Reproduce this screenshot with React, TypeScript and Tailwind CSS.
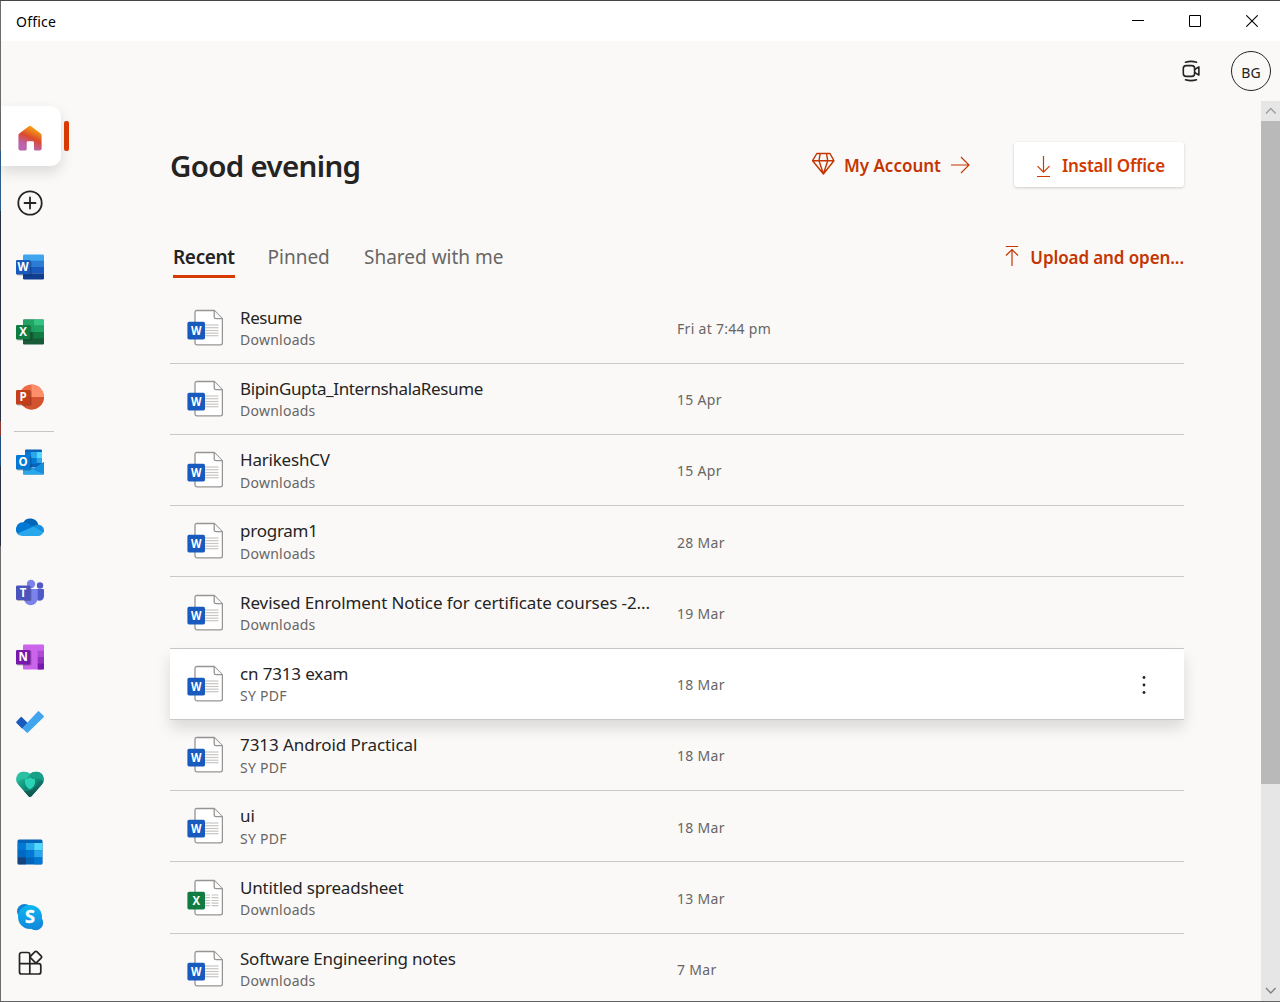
import type { ReactNode } from "react";

type FileRow = {
  name: string;
  place: string;
  date: string;
  kind: "word" | "excel";
  track: string;
  active?: boolean;
};

const files: FileRow[] = [
  { name: "Resume", place: "Downloads", date: "Fri at 7:44 pm", kind: "word", track: "tracking-[-0.4px]" },
  { name: "BipinGupta_InternshalaResume", place: "Downloads", date: "15 Apr", kind: "word", track: "tracking-[-0.37px]" },
  { name: "HarikeshCV", place: "Downloads", date: "15 Apr", kind: "word", track: "tracking-[-0.2px]" },
  { name: "program1", place: "Downloads", date: "28 Mar", kind: "word", track: "tracking-[-0.25px]" },
  { name: "Revised Enrolment Notice for certificate courses -2...", place: "Downloads", date: "19 Mar", kind: "word", track: "tracking-[-0.1px]" },
  { name: "cn 7313 exam", place: "SY PDF", date: "18 Mar", kind: "word", track: "tracking-[-0.15px]", active: true },
  { name: "7313 Android Practical", place: "SY PDF", date: "18 Mar", kind: "word", track: "tracking-[-0.06px]" },
  { name: "ui", place: "SY PDF", date: "18 Mar", kind: "word", track: "tracking-normal" },
  { name: "Untitled spreadsheet", place: "Downloads", date: "13 Mar", kind: "excel", track: "tracking-[-0.19px]" },
  { name: "Software Engineering notes", place: "Downloads", date: "7 Mar", kind: "word", track: "tracking-[-0.21px]" },
];

function Badge({ letter, fill, y = 7 }: { letter: string; fill: string; y?: number }) {
  return (
    <>
      <rect x="0.8" y={y + 0.8} width="14.6" height="14.6" rx="1.2" fill="#000" opacity="0.25" />
      <rect x="0" y={y} width="14.3" height="14.5" rx="1.2" fill={fill} />
      <text x="7.1" y={y + 11.3} textAnchor="middle" fontSize="11.5" fontWeight="700" fill="#fff" fontFamily="'Open Sans', sans-serif">
        {letter}
      </text>
    </>
  );
}

function AppIcon({ children }: { children: ReactNode }) {
  return (
    <svg width="28" height="28" viewBox="0 0 28 28" className="block">
      {children}
    </svg>
  );
}

const HomeIcon = () => (
  <svg width="24" height="26" viewBox="0 0 24 26">
    <defs>
      <linearGradient id="home" x1="0.7" y1="0.1" x2="0.3" y2="1">
        <stop offset="0" stopColor="#f8a012" />
        <stop offset="0.42" stopColor="#dc4a2c" />
        <stop offset="0.8" stopColor="#b964ad" />
      </linearGradient>
    </defs>
    <path d="M10.8 1.2a1.9 1.9 0 0 1 2.4 0l9.5 7.2c.6.5.9 1 .9 1.8V23.6a2 2 0 0 1-2 2h-4a1.7 1.7 0 0 1-1.7-1.7V17.5a1.2 1.2 0 0 0-1.2-1.2H9.9a1.2 1.2 0 0 0-1.2 1.2V23.9A1.7 1.7 0 0 1 7 25.6H2.4a2 2 0 0 1-2-2V10.2c0-.8.3-1.3.9-1.8z" fill="url(#home)" />
  </svg>
);

const PlusIcon = () => (
  <svg width="26" height="26" viewBox="0 0 26 26" fill="none" stroke="#242424" strokeWidth="1.8" strokeLinecap="round">
    <circle cx="13" cy="13" r="11.7" />
    <path d="M13 7.5v11M7.5 13h11" />
  </svg>
);

const WordIcon = () => (
  <AppIcon>
    <clipPath id="wd"><rect x="7" y="1.5" width="21" height="25" rx="1.2" /></clipPath>
    <g clipPath="url(#wd)">
      <path fill="#41a5ee" d="M7 1h21v7H7z" />
      <path fill="#2b7cd3" d="M7 7.8h21v6.3H7z" />
      <path fill="#185abd" d="M7 14h21v6.3H7z" />
      <path fill="#103f91" d="M7 20.2h21V27H7z" />
    </g>
    <Badge letter="W" fill="#185abd" />
  </AppIcon>
);

const ExcelIcon = () => (
  <AppIcon>
    <clipPath id="xl"><rect x="7" y="1.5" width="21" height="25" rx="1.2" /></clipPath>
    <g clipPath="url(#xl)">
      <path fill="#185c37" d="M7 1h21v26H7z" />
      <path fill="#21a366" d="M7 1h10.5v13H7z" />
      <path fill="#33c481" d="M17.5 1H28v6.8H17.5z" />
      <path fill="#21a366" d="M17.5 7.8H28v6.3H17.5z" />
      <path fill="#107c41" d="M17.5 14H28v6.3H17.5z" />
    </g>
    <Badge letter="X" fill="#107c41" />
  </AppIcon>
);

const PowerPointIcon = () => (
  <AppIcon>
    <circle cx="15.6" cy="14" r="12.4" fill="#ed6c47" />
    <path d="M15.6 1.6A12.4 12.4 0 0 1 28 14H15.6z" fill="#ff8f6b" />
    <path d="M3.2 14A12.4 12.4 0 0 0 28 14z" fill="#d35230" />
    <Badge letter="P" fill="#c43e1c" />
  </AppIcon>
);

const OutlookIcon = () => (
  <AppIcon>
    <rect x="9" y="1.5" width="17" height="18" rx="1" fill="#0a62b8" />
    <path fill="#0078d4" d="M9 4h6v12H9z" />
    <path fill="#28a8ea" d="M15 4h5.6v6H15z" />
    <path fill="#50d9ff" d="M20.6 4H26v6h-5.4z" />
    <path fill="#0078d4" d="M15 10h5.6v6H15z" />
    <path fill="#28a8ea" d="M20.6 10H26v5h-5.4z" />
    <path d="M28 14v11.5a1 1 0 0 1-1 1H8a1 1 0 0 1-1-1V16l11 4.5z" fill="#1078cc" />
    <path d="M28 14v11.5l-.4.8L17.500 20.500z" fill="#1490df" />
    <path d="M7 16 27.600 26.300a1 1 0 0 1-.6.2H8a1 1 0 0 1-1-1z" fill="#28a8ea" />
    <Badge letter="O" fill="#0078d4" />
  </AppIcon>
);

const OneDriveIcon = () => (
  <AppIcon>
    <path d="M7 10a8.2 8.2 0 0 1 15.3 2L15 17z" fill="#0364b8" />
    <path d="M7 9.3c2-.3 4 .2 5.6 1.3l6 3.6L2.5 21.7A7 7 0 0 1 7 9.3z" fill="#0078d4" />
    <path d="M16 14.5c2-2 4.2-2.9 6.7-2.7a5.7 5.7 0 0 1 4.8 8z" fill="#1490df" />
    <path d="m1.5 20.5 16-7 9.8 6.1C26 22 24.5 23 22.5 23H7.3a6.9 6.9 0 0 1-5.8-2.5z" fill="#28a8ea" />
  </AppIcon>
);

const TeamsIcon = () => (
  <AppIcon>
    <circle cx="24" cy="6.5" r="3.2" fill="#5059c9" />
    <path d="M20 10h6.8c.8 0 1.2.5 1.2 1.2V17c0 3-2 4.700-4.500 4.700S20 20 20 17z" fill="#5059c9" />
    <circle cx="15" cy="5" r="4.2" fill="#7b83eb" />
    <path d="M8.5 10h12c.8 0 1.200.5 1.200 1.200V20a7 7 0 0 1-13.900 0v-8.800c0-.7.200-1.200.7-1.200z" fill="#7b83eb" />
    <Badge letter="T" fill="#4b53bc" y={6.5} />
  </AppIcon>
);

const OneNoteIcon = () => (
  <AppIcon>
    <clipPath id="on"><rect x="7" y="1.5" width="21" height="25" rx="1.2" /></clipPath>
    <g clipPath="url(#on)">
      <path fill="#ca64ea" d="M7 1h21v26H7z" />
      <path fill="#ae4bd5" d="M21.7 7.8H28v6.3h-6.3z" />
      <path fill="#9332bf" d="M21.7 14H28v6.3h-6.3z" />
      <path fill="#7719aa" d="M21.7 20.2H28V27h-6.3z" />
    </g>
    <Badge letter="N" fill="#7719aa" />
  </AppIcon>
);

const TodoIcon = () => (
  <AppIcon>
    <path d="M4.6 9.200a1 1 0 0 1 1.400 0l6 6-5.800 5.500L.5 15a1 1 0 0 1 0-1.400z" fill="#185abd" />
    <path d="M21.8 3.400a1 1 0 0 1 1.400 0L27.600 7.800a1 1 0 0 1 0 1.400L12 24.600a1 1 0 0 1-1.400 0l-4.500-4.400z" fill="#41a5ee" />
  </AppIcon>
);

const FamilyIcon = () => (
  <AppIcon>
    <defs>
      <linearGradient id="fmL" x1="0" y1="0" x2="0.8" y2="1">
        <stop offset="0" stopColor="#35d2b2" />
        <stop offset="0.45" stopColor="#12977f" />
        <stop offset="1" stopColor="#0d6157" />
      </linearGradient>
      <linearGradient id="fmR" x1="0.2" y1="0" x2="0.5" y2="1">
        <stop offset="0" stopColor="#14806f" />
        <stop offset="1" stopColor="#0b5149" />
      </linearGradient>
    </defs>
    <path d="M14 3C10.500-.2 4-.2 1.500 4-.8 8 .2 11.500 3 14.500L12.500 25.300c1 1 2 1 3 0L25 14.500c2.800-3 3.800-6.500 1.500-10.500C24-.2 17.500-.2 14 3z" fill="url(#fmL)" />
    <path d="M25 14.500l-9.500 10.800c-1 1-2 1-3 0L8 20c8 .5 13-3 13.500-10l6 .5c-.4 1.500-1.200 2.800-2.500 4z" fill="url(#fmR)" />
    <path d="M14 3C17.500-.2 24-.2 26.500 4c1.300 2.300 1.500 4.300 1 6.500-1.500-2.500-6-3.500-9.500-2.500z" fill="#16a088" />
    <path d="M1.500 4C4-.2 10.500-.2 14 3l-3.500 5C7 7.200 3 8 1 11.500.2 9 .2 6.500 1.500 4z" fill="#2cc0a3" />
    <path d="M14 6.500c1.500 1.300 3 1.700 5 1.700.6 4.300-1 8-5 10.300-4-2.300-5.600-6-5-10.300 2 0 3.500-.4 5-1.700z" fill="#2bd3b4" />
  </AppIcon>
);

const CalendarIcon = () => (
  <AppIcon>
    <clipPath id="cal"><rect x="1.5" y="1.5" width="25" height="25" rx="1.5" /></clipPath>
    <g clipPath="url(#cal)">
      <path fill="#0364b8" d="M1 1h26v26H1z" />
      <rect x="1.5" y="5" width="8.3" height="7.2" fill="#0078d4" />
      <rect x="9.8" y="5" width="8.4" height="7.2" fill="#28a8ea" />
      <rect x="18.2" y="5" width="8.3" height="7.2" fill="#50d9ff" />
      <rect x="1.5" y="12.2" width="8.3" height="7.2" fill="#0069c4" />
      <rect x="9.8" y="12.2" width="8.4" height="7.2" fill="#0078d4" />
      <rect x="18.2" y="12.2" width="8.3" height="7.2" fill="#28a8ea" />
      <rect x="1.5" y="19.4" width="8.3" height="7.2" fill="#14447d" />
      <rect x="18.2" y="19.4" width="8.3" height="7.2" fill="#0078d4" />
    </g>
  </AppIcon>
);

const SkypeIcon = () => (
  <AppIcon>
    <defs>
      <linearGradient id="sk" x1="0.5" y1="0" x2="0.5" y2="1">
        <stop offset="0" stopColor="#0cb8f1" />
        <stop offset="1" stopColor="#1188dc" />
      </linearGradient>
    </defs>
    <circle cx="8.5" cy="8.5" r="7.5" fill="#1181d0" />
    <circle cx="19.7" cy="19.7" r="7.5" fill="#1687d9" />
    <circle cx="14" cy="14" r="12" fill="url(#sk)" />
    <text x="14" y="20.3" textAnchor="middle" fontSize="18" fontWeight="700" fill="#fff" stroke="#fff" strokeWidth="0.4" fontFamily="'Open Sans', sans-serif">S</text>
  </AppIcon>
);

const AppsIcon = () => (
  <svg width="26" height="26" viewBox="0 0 26 26" fill="none" stroke="#242424" strokeWidth="1.7" strokeLinejoin="round">
    <path d="M12.8 13.7V4.500a2 2 0 0 0-2-2H4.500a2 2 0 0 0-2 2V22a2 2 0 0 0 2 2h17.300a2 2 0 0 0 2-2v-6.300a2 2 0 0 0-2-2H2.500M12.800 13.700V24" />
    <path d="M18.1 1.700a1.200 1.200 0 0 1 1.700 0l4.500 4.500a1.200 1.200 0 0 1 0 1.700l-4.500 4.500a1.200 1.200 0 0 1-1.700 0l-4.500-4.500a1.200 1.200 0 0 1 0-1.700z" />
  </svg>
);

const lineYs = [16, 18.7, 21.5, 24.2, 26.7];

function FileIcon({ kind }: { kind: "word" | "excel" }) {
  return (
    <svg width="36" height="38" viewBox="0 0 36 38" className="block shrink-0">
      <path d="M9.7 1.5h17.5l8.2 8.2V34a1.8 1.8 0 0 1-1.8 1.8H9.8A1.8 1.8 0 0 1 8 34V3.3a1.8 1.8 0 0 1 1.7-1.8z" fill="#fff" stroke="#979593" strokeWidth="1.3" />
      <path d="M27.2 1.7v6.200a1.800 1.800 0 0 0 1.800 1.800h6.200" fill="#fafafa" stroke="#979593" strokeWidth="1.3" />
      {lineYs.map((y) => (
        <path
          key={y}
          d={kind === "word" ? `M18 ${y}h13.5` : `M17.5 ${y}h5.5M24.5 ${y}h7`}
          stroke="#c8c6c4"
          strokeWidth="1.2"
        />
      ))}
      <rect x="0.4" y="12.8" width="17.6" height="17.6" rx="1.6" fill={kind === "word" ? "#185abd" : "#107c41"} />
      <text x="9.2" y="26.2" textAnchor="middle" fontSize="13" fontWeight="700" fill="#fff" fontFamily="'Open Sans', sans-serif" textLength={kind === "word" ? 10.5 : 7.5} lengthAdjust="spacingAndGlyphs">
        {kind === "word" ? "W" : "X"}
      </text>
    </svg>
  );
}

function SideItem({ children, className = "" }: { children: ReactNode; className?: string }) {
  return <div className={`flex h-[65px] w-[58px] shrink-0 items-center justify-center ${className}`}>{children}</div>;
}

function Sidebar() {
  return (
    <nav className="flex w-[69px] shrink-0 flex-col pt-[5px]">
      <div className="flex items-center">
        <div className="flex h-[60px] w-[60px] items-center rounded-r-[10px] bg-white pt-[3px] pl-[17px] shadow-[0_6px_14px_rgba(0,0,0,0.13)]">
          <HomeIcon />
        </div>
        <div className="ml-[3px] h-[30px] w-[5px] rounded-[2px] bg-[#d83b01]" />
      </div>
      <SideItem className="mt-[4px]"><PlusIcon /></SideItem>
      <SideItem className="-mt-px"><WordIcon /></SideItem>
      <SideItem><ExcelIcon /></SideItem>
      <SideItem><PowerPointIcon /></SideItem>
      <div className="mt-[2px] -mb-[3px] ml-[13px] h-px w-[40px] shrink-0 bg-[#c8c6c4]" />
      <SideItem><OutlookIcon /></SideItem>
      <SideItem><OneDriveIcon /></SideItem>
      <SideItem className="pt-[2px]"><TeamsIcon /></SideItem>
      <SideItem><OneNoteIcon /></SideItem>
      <SideItem><TodoIcon /></SideItem>
      <SideItem className="pb-[3px]"><FamilyIcon /></SideItem>
      <SideItem><CalendarIcon /></SideItem>
      <SideItem className="pt-px"><SkypeIcon /></SideItem>
      <SideItem className="-mt-[19px]"><AppsIcon /></SideItem>
    </nav>
  );
}

function Row({ file }: { file: FileRow }) {
  return (
    <div
      className={`flex h-[71.25px] shrink-0 items-start border-b border-[#cbc9c8] ${
        file.active ? "relative bg-white shadow-[0_8px_14px_rgba(0,0,0,0.13)]" : ""
      }`}
    >
      <div className="ml-[17px] pt-[16.25px]"><FileIcon kind={file.kind} /></div>
      <div className="ml-[17px] w-[437px] pt-[13.35px]">
        <div className={`h-[24.5px] text-[17px] leading-[24px] whitespace-nowrap text-[#252423] ${file.track}`}>{file.name}</div>
        <div className="h-[20px] text-[14px] leading-[20px] tracking-[0.25px] text-[#686664]">{file.place}</div>
      </div>
      <div className="flex-1 pt-[26.6px] text-[14px] leading-[20px] tracking-[0.3px] text-[#686664]">{file.date}</div>
      {file.active && (
        <svg width="6" height="22" viewBox="0 0 6 22" className="mt-[25px] mr-[37px]" fill="#252423">
          <circle cx="3" cy="3.5" r="1.4" />
          <circle cx="3" cy="11" r="1.4" />
          <circle cx="3" cy="18.5" r="1.4" />
        </svg>
      )}
    </div>
  );
}

function TitleBar() {
  return (
    <div className="flex h-[40px] shrink-0 items-center bg-white pl-[15px]">
      <span className="flex-1 text-[14px] tracking-[0.2px] text-black">Office</span>
      <div className="flex items-center gap-[44px] pr-[22px]">
        <svg width="12" height="12" viewBox="0 0 12 12"><path d="M0 5.5h12" stroke="#000" /></svg>
        <svg width="12" height="12" viewBox="0 0 12 12" className="ml-px"><path d="M.5.5h11v11H.5z" fill="none" stroke="#000" /></svg>
        <svg width="12" height="12" viewBox="0 0 12 12" className="ml-px"><path d="m.3.3 11.4 11.4M11.7.3.3 11.7" stroke="#000" strokeWidth="1.1" /></svg>
      </div>
    </div>
  );
}

function TopBar() {
  return (
    <div className="flex h-[60px] shrink-0 items-center justify-end pr-[9px]">
      <svg width="20" height="24" viewBox="0 0 20 24" fill="none" stroke="#242424" strokeWidth="1.6" strokeLinecap="round" strokeLinejoin="round" className="mr-[30px]">
        <rect x="2.3" y="6.6" width="11.3" height="10.8" rx="2.8" />
        <path d="m13.6 10.5 4.3-2.6v8.2l-4.3-2.6" />
        <path d="M4.5 3.2q5.500-1.700 11 0M4.500 20.800q5.500 1.700 11 0" />
      </svg>
      <div className="flex h-[40px] w-[40px] items-center justify-center rounded-full border border-[#252423] pt-[3px] text-[14px] text-[#252423]">
        BG
      </div>
    </div>
  );
}

function ScrollBar() {
  return (
    <div className="flex w-[19px] shrink-0 flex-col items-center bg-[#e6e6e6]">
      <svg width="12" height="20" viewBox="0 0 12 20" fill="none" stroke="#9d9d9d" strokeWidth="1.3"><path d="m1 12.5 4.800-5 4.800 5" /></svg>
      <div className="h-[663px] w-full bg-[#b9b9b9]" />
      <svg width="12" height="20" viewBox="0 0 12 20" fill="none" stroke="#808080" strokeWidth="1.3" className="mt-auto"><path d="m1 7 4.800 5 4.800-5" /></svg>
    </div>
  );
}

export default function App() {
  return (
    <div className="flex h-[1002px] w-[1280px] flex-col overflow-hidden border-t border-b border-t-[#454545] border-b-[#626262] bg-[#faf9f8] font-['Noto_Sans','Open_Sans',sans-serif]">
      <div className="flex min-h-0 flex-1">
        <div className="flex w-px shrink-0 flex-col bg-[#6b6b6b]">
          <div className="h-[150px] bg-[#6b6b6b]" />
          <div className="h-[60px] bg-[#2e5f8c]" />
          <div className="h-[210px] bg-[#28303f]" />
          <div className="h-[15px] bg-[#8c3a34]" />
          <div className="h-[30px] bg-[#1d4d7c]" />
          <div className="h-[80px] bg-[#28303f]" />
        </div>
        <div className="flex min-w-0 flex-1 flex-col">
          <TitleBar />
          <TopBar />
          <div className="flex min-h-0 flex-1">
            <Sidebar />
            <main className="flex min-w-0 flex-1 flex-col overflow-hidden pt-[41px] pr-[77px] pl-[100px]">
              <div className="flex h-[46px] shrink-0 items-start">
                <h1 className="flex-1 pt-[4px] text-[29.5px] leading-[40px] font-semibold tracking-[-0.68px] text-[#252423]">Good evening</h1>
                <div className="flex h-[46px] items-center text-[17px] font-semibold text-[#c43501]">
                  <svg width="24" height="24" viewBox="0 0 24 24" fill="none" stroke="currentColor" strokeWidth="1.4" strokeLinejoin="round" className="mb-[2px]">
                    <path d="M5.8 1.5h13.200l3.900 7.200L12.400 22 1.600 8.700zM1.600 8.700h21.300M9.200 1.500 8 8.700 12.400 22l4.300-13.300-1.200-7.200" />
                  </svg>
                  <span className="mt-[2px] ml-[9px]">My Account</span>
                  <svg width="20" height="20" viewBox="0 0 20 20" fill="none" stroke="currentColor" strokeWidth="1.1" className="ml-[10px]">
                    <path d="M0 10h18M10 2l8 8-8 8" />
                  </svg>
                </div>
                <button className="ml-[43px] flex h-[45px] w-[170px] items-center rounded-[3px] bg-white pl-[22px] text-[17px] font-semibold text-[#d03a02] shadow-[0_1px_3px_rgba(0,0,0,0.18)]">
                  <svg width="16" height="24" viewBox="0 0 16 24" fill="none" stroke="currentColor" strokeWidth="1.2" className="mt-[4px]">
                    <path d="M7.5 1v16M1.500 11.200l6 6 6-6M1 21.500h13" />
                  </svg>
                  <span className="mt-[3px] ml-[10px] tracking-[-0.2px] whitespace-nowrap">Install Office</span>
                </button>
              </div>
              <div className="mt-[53px] flex h-[37px] shrink-0 items-start pl-[3px] text-[19px] leading-[32px] text-[#686664]">
                <span className="h-[37px] w-[62px] border-b-[3px] border-[#d83b01] font-semibold tracking-[-0.35px] whitespace-nowrap text-[#252423]">Recent</span>
                <span className="ml-[32.5px] w-[62px]">Pinned</span>
                <span className="ml-[34.5px] flex-1">Shared with me</span>
                <span className="flex items-center text-[17px] font-semibold whitespace-nowrap text-[#c43501]">
                  <svg width="14" height="22" viewBox="0 0 14 22" fill="none" stroke="currentColor" strokeWidth="1.2" className="mb-[4px]">
                    <path d="M.8 1.5h12.400M7 21V5M1 10.500l6-6 6 6" />
                  </svg>
                  <span className="mt-px ml-[11px] tracking-[-0.1px]">Upload and open...</span>
                </span>
              </div>
              <div className="mt-[14.4px] flex flex-col">
                {files.map((f) => (
                  <Row key={f.name} file={f} />
                ))}
              </div>
            </main>
            <ScrollBar />
          </div>
        </div>
      </div>
    </div>
  );
}
